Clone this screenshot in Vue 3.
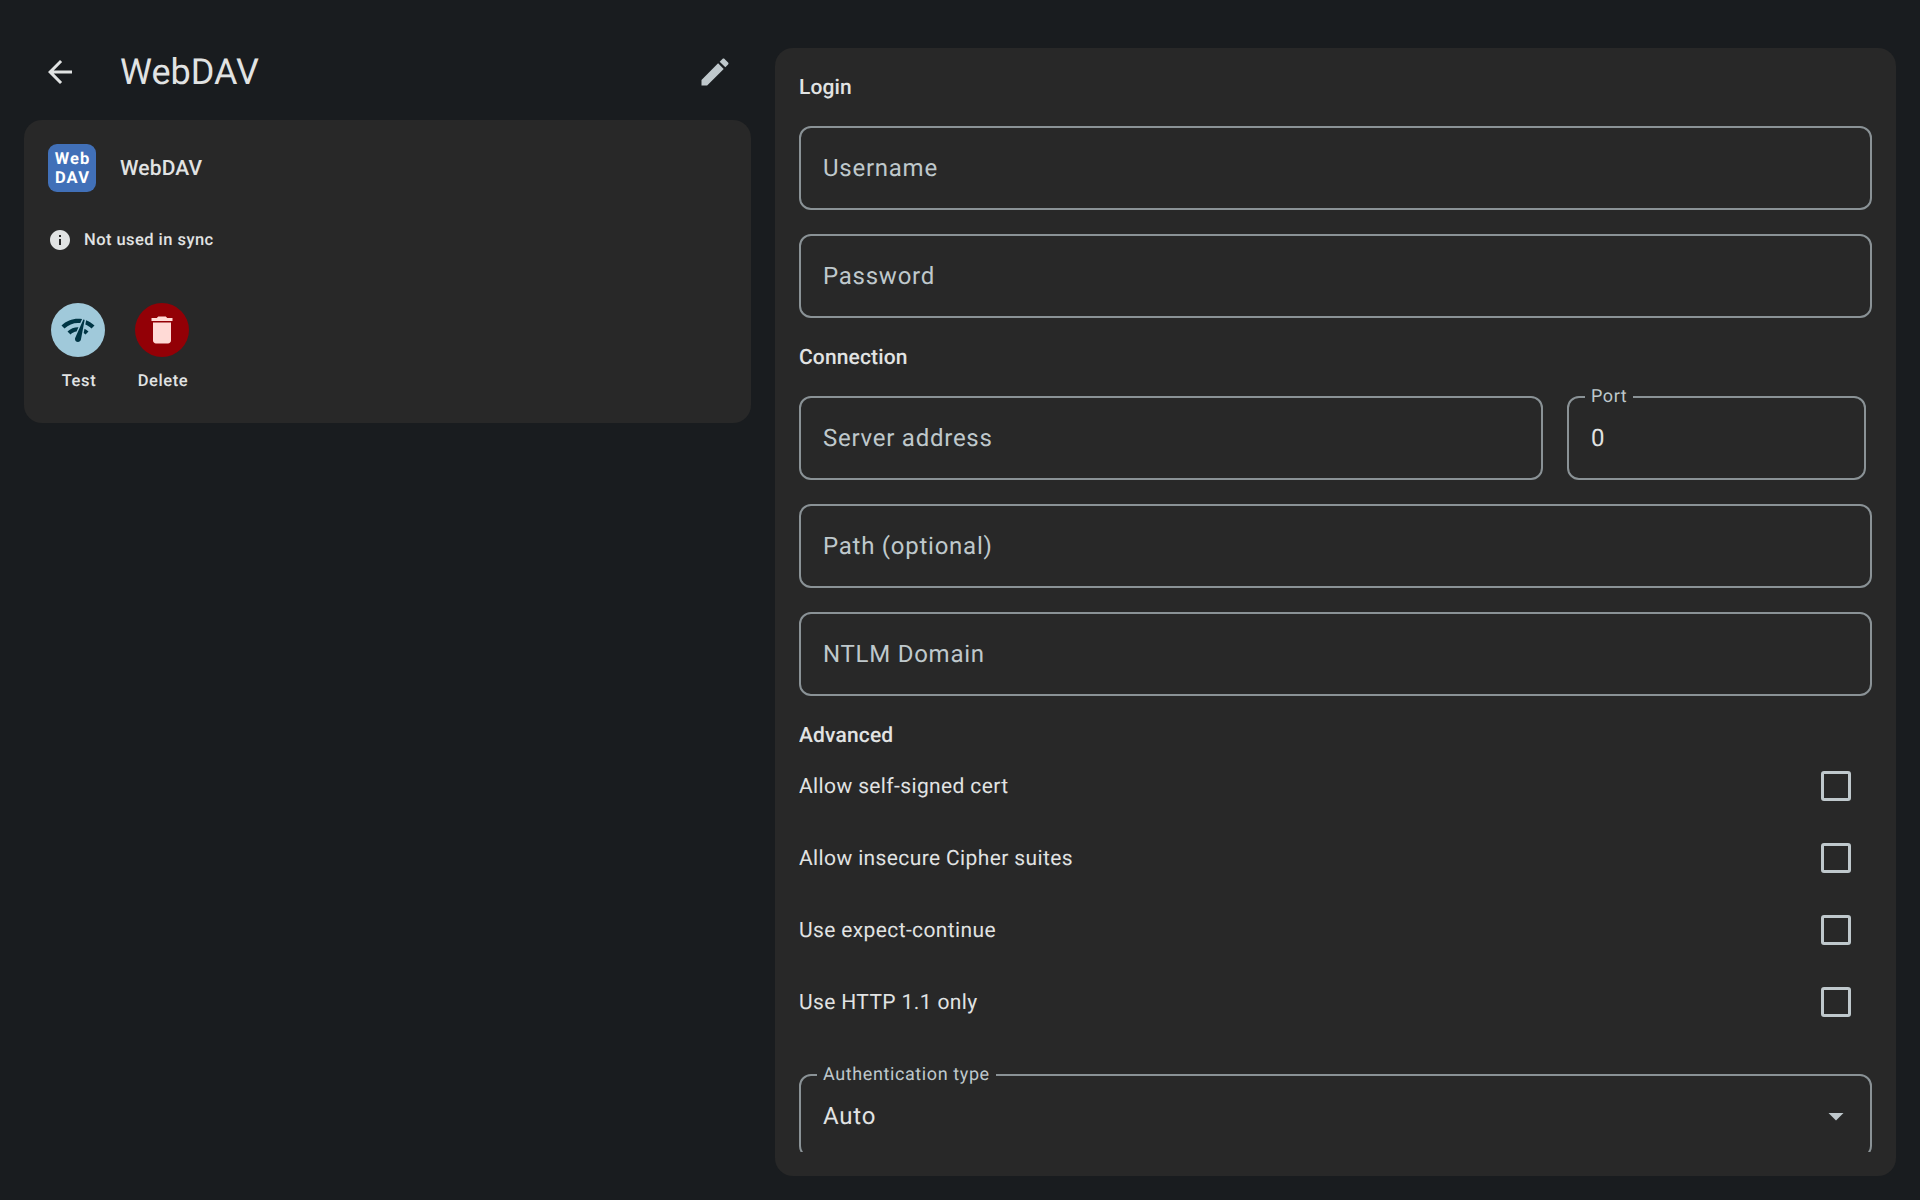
<template>
  <div class="page">
    <!-- left column: header + remote card -->
    <div class="left_col">
      <div class="head_row">
        <button class="icon_btn">
          <svg class="icon back_icon" viewBox="0 0 24 24"><path d="M20 11H7.83l5.59-5.59L12 4l-8 8 8 8 1.41-1.41L7.83 13H20v-2z" /></svg>
        </button>
        <h1 class="head_title">WebDAV</h1>
        <button class="icon_btn">
          <svg class="icon edit_icon" viewBox="0 0 24 24"><path d="M3 17.25V21h3.75L17.81 9.94l-3.75-3.75L3 17.25zM20.71 7.04c.39-.39.39-1.02 0-1.41l-2.34-2.34c-.39-.39-1.02-.39-1.41 0l-1.83 1.83 3.75 3.75 1.83-1.83z" /></svg>
        </button>
      </div>

      <div class="remote_card">
        <div class="remote_row">
          <div class="logo">Web<br />DAV</div>
          <span class="remote_name">WebDAV</span>
        </div>
        <div class="info_row">
          <svg class="info_icon" viewBox="0 0 24 24"><path d="M12 2C6.48 2 2 6.48 2 12s4.48 10 10 10 10-4.48 10-10S17.52 2 12 2zm1 15h-2v-6h2v6zm0-8h-2V7h2v2z" /></svg>
          <span class="info_text">Not used in sync</span>
        </div>
        <div class="action_row">
          <div class="action">
            <div class="action_circle test_circle">
              <svg class="icon" viewBox="0 0 24 24"><path d="M15.9 5c-.17 0-.32.09-.41.23l-.07.15-5.18 11.65c-.16.29-.26.61-.26.96 0 1.11.9 2.01 2.01 2.01.96 0 1.77-.68 1.96-1.59l.01-.03L16.4 5.5c0-.28-.22-.5-.5-.5zM1 9l2 2c2.88-2.88 6.79-4.08 10.53-3.62l1.19-2.68C9.89 3.84 4.74 5.27 1 9zm20 2l2-2c-1.64-1.64-3.54-2.82-5.58-3.57l-.53 2.82c1.5.62 2.9 1.53 4.11 2.75zm-4 4l2-2c-.8-.8-1.7-1.42-2.66-1.89l-.55 2.92c.42.27.83.59 1.21.97zM5 13l2 2c1.13-1.13 2.56-1.79 4.03-2l1.28-2.88c-2.63-.08-5.3.87-7.31 2.88z" /></svg>
            </div>
            <label>Test</label>
          </div>
          <div class="action">
            <div class="action_circle delete_circle">
              <svg class="icon" viewBox="0 0 24 24"><path d="M6 19c0 1.1.9 2 2 2h8c1.1 0 2-.9 2-2V7H6v12zM19 4h-3.5l-1-1h-5l-1 1H5v2h14V4z" /></svg>
            </div>
            <label>Delete</label>
          </div>
        </div>
      </div>
    </div>

    <!-- right panel: settings form, cut off at the bottom like a scroll view -->
    <div class="form_panel">
      <div class="form_scroll">
        <h2 class="section_title">Login</h2>
        <div class="field" v-for="name in loginFields" :key="name">
          <span class="placeholder">{{ name }}</span>
        </div>

        <h2 class="section_title">Connection</h2>
        <div class="server_row">
          <div class="field server_field"><span class="placeholder">Server address</span></div>
          <div class="field port_field">
            <span class="float_label">Port</span>
            <span class="value">0</span>
          </div>
        </div>
        <div class="field" v-for="name in connectionFields" :key="name">
          <span class="placeholder">{{ name }}</span>
        </div>

        <h2 class="section_title">Advanced</h2>
        <div class="check_list">
          <div class="check_row" v-for="name in advancedOptions" :key="name">
            <span class="check_text">{{ name }}</span>
            <div class="check_cell"><div class="check_box"></div></div>
          </div>
        </div>

        <div class="field auth_field">
          <span class="float_label">Authentication type</span>
          <span class="value">Auto</span>
          <svg class="icon drop_icon" viewBox="0 0 24 24"><path d="M7 10l5 5 5-5z" /></svg>
        </div>
      </div>
    </div>
  </div>
</template>

<script setup>
const loginFields = ["Username", "Password"];
const connectionFields = ["Path (optional)", "NTLM Domain"];
const advancedOptions = [
  "Allow self-signed cert",
  "Allow insecure Cipher suites",
  "Use expect-continue",
  "Use HTTP 1.1 only",
];
</script>

<style>
html,
body {
  margin: 0;
  background: #191c1f;
}
</style>

<style scoped>
.page {
  display: flex;
  gap: 24px;
  box-sizing: border-box;
  width: 1920px;
  height: 1200px;
  padding: 0 24px;
  overflow: hidden;
  background: #191c1f;
  color: #e1e3e3;
  font-family: Roboto, "Noto Sans", sans-serif;
  text-rendering: geometricPrecision;
}

/* left column */
.left_col {
  flex: 0 0 727px;
  padding-top: 36px;
}
.head_row {
  display: flex;
  align-items: center;
  height: 72px;
  margin-bottom: 12px;
}
.icon_btn {
  display: flex;
  align-items: center;
  justify-content: center;
  width: 72px;
  height: 72px;
  padding: 0;
  border: none;
  background: none;
}
.icon {
  display: block;
  width: 36px;
  height: 36px;
  fill: currentColor;
}
.back_icon {
  color: #e1e3e3;
}
.edit_icon {
  color: #bfc8cc;
}
.head_title {
  flex: 1;
  margin: 0 0 0 24px;
  font-size: 36px;
  font-weight: 400;
  line-height: 48px;
}

.remote_card {
  box-sizing: border-box;
  height: 303px;
  padding: 24px;
  border-radius: 18px;
  background: #282828;
}
.remote_row {
  display: flex;
  align-items: center;
  gap: 24px;
}
.logo {
  box-sizing: border-box;
  width: 48px;
  height: 48px;
  padding: 6px 0 0 1px;
  border-radius: 9px;
  background: #4170b8;
  color: #fff;
  font-size: 16.5px;
  font-weight: 700;
  line-height: 19px;
  letter-spacing: 1.1px;
  text-align: center;
}
.remote_name {
  padding-top: 2px;
  font-size: 21px;
  font-weight: 500;
  letter-spacing: 0.15px;
}
.info_row {
  display: flex;
  align-items: center;
  gap: 12px;
  margin-top: 36px;
  font-size: 16.5px;
  font-weight: 500;
  letter-spacing: 0.45px;
}
.info_text {
  padding-top: 2px;
  line-height: 22px;
}
.info_icon {
  display: block;
  width: 24px;
  height: 24px;
  fill: #e1e3e3;
}
.action_row {
  display: flex;
  margin-top: 51px;
  margin-left: -12px;
}
.action {
  display: flex;
  flex-direction: column;
  align-items: center;
  width: 84px;
}
.action label {
  margin-top: 13px;
  padding-left: 2px;
  font-size: 16.5px;
  font-weight: 500;
  letter-spacing: 0.6px;
  line-height: 24px;
}
.action_circle {
  display: flex;
  align-items: center;
  justify-content: center;
  width: 54px;
  height: 54px;
  border-radius: 50%;
}
.test_circle {
  background: #a0c9da;
  color: #003544;
}
.delete_circle {
  background: #930006;
  color: #ffdad6;
}

/* right panel */
.form_panel {
  flex: 1;
  box-sizing: border-box;
  height: 1128px;
  margin-top: 48px;
  padding: 24px;
  border-radius: 18px;
  background: #282828;
}
.form_scroll {
  height: 1080px;
  overflow: hidden;
}
.section_title {
  margin: 0 0 23px;
  padding-top: 1px;
  font-size: 21px;
  font-weight: 500;
  line-height: 30px;
  letter-spacing: 0.15px;
}
.field {
  position: relative;
  display: flex;
  align-items: center;
  box-sizing: border-box;
  height: 84px;
  margin-bottom: 24px;
  padding: 0 22px;
  border: 2px solid #8a9296;
  border-radius: 12px;
}
.placeholder {
  color: #bfc8cc;
  font-size: 24px;
  letter-spacing: 0.75px;
}
.value {
  font-size: 24px;
  letter-spacing: 0.75px;
}
.float_label {
  position: absolute;
  top: -13px;
  left: 16px;
  padding: 0 6px;
  background: #282828;
  color: #bfc8cc;
  font-size: 18px;
  line-height: 24px;
  letter-spacing: 0.6px;
}
.server_row {
  display: flex;
  gap: 24px;
}
.server_field {
  flex: 1;
}
.port_field {
  flex: 0 0 299px;
  margin-right: 6px;
}
.check_list {
  margin-top: -24px;
}
.check_row {
  display: flex;
  align-items: center;
  justify-content: space-between;
  height: 72px;
  font-size: 21px;
  letter-spacing: 0.375px;
}
.check_text {
  padding-top: 2px;
}
.check_cell {
  display: flex;
  align-items: center;
  justify-content: center;
  width: 72px;
  height: 72px;
}
.check_box {
  box-sizing: border-box;
  width: 30px;
  height: 30px;
  border: 3px solid #bfc8cc;
  border-radius: 3px;
}
.auth_field {
  margin-top: 36px;
}
.drop_icon {
  position: absolute;
  right: 16px;
  top: 22px;
  color: #bfc8cc;
}
</style>
